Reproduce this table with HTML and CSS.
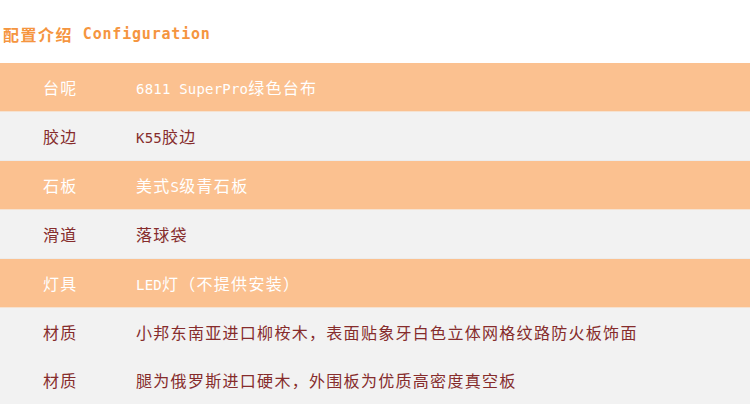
FILE: index.html
```html
<!DOCTYPE html>
<html lang="zh">
<head>
<meta charset="utf-8">
<link rel="stylesheet" href="styles.css">
</head>
<body>
<div class="page">
  <h2 class="title">配置介绍<span class="en"> Configuration</span></h2>
  <div class="table">
    <div class="row odd"><div class="label">台呢</div><div class="value"><span class="en">6811 SuperPro</span>绿色台布</div></div>
    <div class="row even"><div class="label">胶边</div><div class="value"><span class="en">K55</span>胶边</div></div>
    <div class="row odd"><div class="label">石板</div><div class="value">美式<span class="en">S</span>级青石板</div></div>
    <div class="row even"><div class="label">滑道</div><div class="value">落球袋</div></div>
    <div class="row odd"><div class="label">灯具</div><div class="value"><span class="en">LED</span>灯（不提供安装）</div></div>
    <div class="row even plain"><div class="label">材质</div><div class="value">小邦东南亚进口柳桉木，表面贴象牙白色立体网格纹路防火板饰面</div></div>
    <div class="row even plain"><div class="label">材质</div><div class="value">腿为俄罗斯进口硬木，外围板为优质高密度真空板</div></div>
  </div>
</div>
</body>
</html>
```
FILE: styles.css
```css
html, body {
  margin: 0;
  padding: 0;
  background: #ffffff;
}
.page {
  width: 750px;
  font-family: "DejaVu Sans Mono", "Noto Sans CJK SC", monospace;
}
.title {
  margin: 0;
  height: 63px;
  display: flex;
  align-items: center;
  padding-left: 3px;
  font-size: 16px;
  font-weight: bold;
  letter-spacing: 1.5px;
  color: #f5953f;
  box-sizing: border-box;
  padding-top: 5px;
}
.title .en {
  font-size: 15px;
  letter-spacing: 0.8px;
  white-space: pre;
}
.table {
  display: flex;
  flex-direction: column;
}
.row {
  display: flex;
  align-items: center;
  height: 48px;
  border-bottom: 1px solid #ececec;
  padding-left: 43px;
  font-size: 16px;
  letter-spacing: 1.3px;
}
.row.plain {
  border-bottom: none;
}
.row.odd {
  background: #fbc190;
  color: #ffffff;
  border-bottom-color: #f6e2d0;
}
.row.even {
  background: #f2f2f2;
  color: #862c2c;
}
.label {
  width: 93px;
  flex: none;
}
.value .en {
  font-size: 14px;
  letter-spacing: 0.2px;
}
```
